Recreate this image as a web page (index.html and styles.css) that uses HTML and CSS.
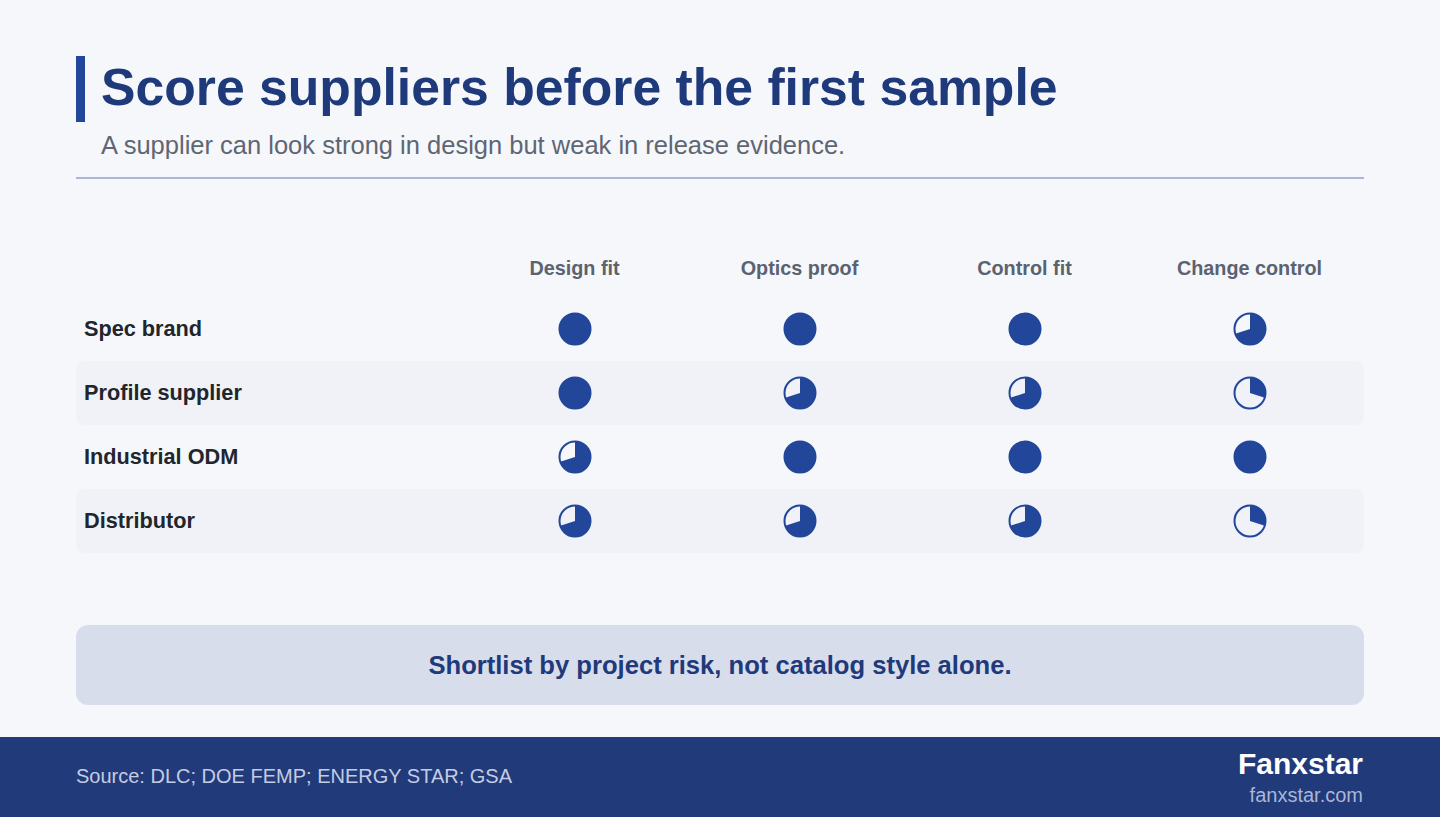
FILE: index.html
```html
<!DOCTYPE html>
<html lang="en">
<head>
<meta charset="utf-8">
<title>Score suppliers before the first sample</title>
<link rel="stylesheet" href="styles.css">
</head>
<body>
<div class="page">
  <main class="main">
    <header class="head">
      <h1 class="title">Score suppliers before the first sample</h1>
      <p class="subtitle">A supplier can look strong in design but weak in release evidence.</p>
    </header>
    <div class="divider"></div>

    <section class="table">
      <div class="row row-head">
        <div class="cell-label"></div>
        <div class="cell">Design fit</div>
        <div class="cell">Optics proof</div>
        <div class="cell">Control fit</div>
        <div class="cell">Change control</div>
      </div>

      <div class="row">
        <div class="cell-label">Spec brand</div>
        <div class="cell"><svg class="ball" viewBox="0 0 34 34"><circle cx="17" cy="17" r="15.5" class="ring"/><circle cx="17" cy="17" r="15.5" class="fill"/></svg></div>
        <div class="cell"><svg class="ball" viewBox="0 0 34 34"><circle cx="17" cy="17" r="15.5" class="ring"/><circle cx="17" cy="17" r="15.5" class="fill"/></svg></div>
        <div class="cell"><svg class="ball" viewBox="0 0 34 34"><circle cx="17" cy="17" r="15.5" class="ring"/><circle cx="17" cy="17" r="15.5" class="fill"/></svg></div>
        <div class="cell"><svg class="ball" viewBox="0 0 34 34"><circle cx="17" cy="17" r="15.5" class="ring"/><path class="fill" d="M17 17 L17 1.5 A15.5 15.5 0 1 1 2.26 21.79 Z"/></svg></div>
      </div>

      <div class="row row-alt">
        <div class="cell-label">Profile supplier</div>
        <div class="cell"><svg class="ball" viewBox="0 0 34 34"><circle cx="17" cy="17" r="15.5" class="ring"/><circle cx="17" cy="17" r="15.5" class="fill"/></svg></div>
        <div class="cell"><svg class="ball" viewBox="0 0 34 34"><circle cx="17" cy="17" r="15.5" class="ring"/><path class="fill" d="M17 17 L17 1.5 A15.5 15.5 0 1 1 2.26 21.79 Z"/></svg></div>
        <div class="cell"><svg class="ball" viewBox="0 0 34 34"><circle cx="17" cy="17" r="15.5" class="ring"/><path class="fill" d="M17 17 L17 1.5 A15.5 15.5 0 1 1 2.26 21.79 Z"/></svg></div>
        <div class="cell"><svg class="ball" viewBox="0 0 34 34"><circle cx="17" cy="17" r="15.5" class="ring"/><path class="fill" d="M17 17 L17 1.5 A15.5 15.5 0 0 1 31.74 21.79 Z"/></svg></div>
      </div>

      <div class="row">
        <div class="cell-label">Industrial ODM</div>
        <div class="cell"><svg class="ball" viewBox="0 0 34 34"><circle cx="17" cy="17" r="15.5" class="ring"/><path class="fill" d="M17 17 L17 1.5 A15.5 15.5 0 1 1 2.26 21.79 Z"/></svg></div>
        <div class="cell"><svg class="ball" viewBox="0 0 34 34"><circle cx="17" cy="17" r="15.5" class="ring"/><circle cx="17" cy="17" r="15.5" class="fill"/></svg></div>
        <div class="cell"><svg class="ball" viewBox="0 0 34 34"><circle cx="17" cy="17" r="15.5" class="ring"/><circle cx="17" cy="17" r="15.5" class="fill"/></svg></div>
        <div class="cell"><svg class="ball" viewBox="0 0 34 34"><circle cx="17" cy="17" r="15.5" class="ring"/><circle cx="17" cy="17" r="15.5" class="fill"/></svg></div>
      </div>

      <div class="row row-alt">
        <div class="cell-label">Distributor</div>
        <div class="cell"><svg class="ball" viewBox="0 0 34 34"><circle cx="17" cy="17" r="15.5" class="ring"/><path class="fill" d="M17 17 L17 1.5 A15.5 15.5 0 1 1 2.26 21.79 Z"/></svg></div>
        <div class="cell"><svg class="ball" viewBox="0 0 34 34"><circle cx="17" cy="17" r="15.5" class="ring"/><path class="fill" d="M17 17 L17 1.5 A15.5 15.5 0 1 1 2.26 21.79 Z"/></svg></div>
        <div class="cell"><svg class="ball" viewBox="0 0 34 34"><circle cx="17" cy="17" r="15.5" class="ring"/><path class="fill" d="M17 17 L17 1.5 A15.5 15.5 0 1 1 2.26 21.79 Z"/></svg></div>
        <div class="cell"><svg class="ball" viewBox="0 0 34 34"><circle cx="17" cy="17" r="15.5" class="ring"/><path class="fill" d="M17 17 L17 1.5 A15.5 15.5 0 0 1 31.74 21.79 Z"/></svg></div>
      </div>
    </section>

    <div class="callout">Shortlist by project risk, not catalog style alone.</div>
  </main>

  <footer class="footer">
    <div class="source">Source: DLC; DOE FEMP; ENERGY STAR; GSA</div>
    <div class="brand">
      <div class="brand-name">Fanxstar</div>
      <div class="brand-url">fanxstar.com</div>
    </div>
  </footer>
</div>
</body>
</html>
```

FILE: styles.css
```css
* { box-sizing: border-box; }

html, body {
  margin: 0;
  padding: 0;
}

body {
  background: #f5f7fb;
  font-family: "Liberation Sans", Arial, sans-serif;
}

.page {
  width: 1440px;
  height: 817px;
  display: flex;
  flex-direction: column;
  overflow: hidden;
}

.main {
  padding: 56px 76px 0 76px;
}

.head {
  display: flex;
  flex-direction: column;
}

.title {
  margin: 0;
  font-size: 51.7px;
  line-height: 62px;
  padding-bottom: 4px;
  font-weight: 700;
  color: #1f3a7a;
  border-left: 9px solid #22479a;
  padding-left: 16px;
}

.subtitle {
  margin: 8px 0 0 25px;
  font-size: 25.5px;
  line-height: 30px;
  color: #5e6673;
}

.divider {
  margin-top: 17px;
  height: 2px;
  background: #a9b6d8;
}

.table {
  margin-top: 60px;
  display: flex;
  flex-direction: column;
}

.row {
  display: grid;
  grid-template-columns: 386px repeat(4, 225px);
  height: 64px;
  align-items: center;
  border-radius: 8px;
}

.row-head {
  height: 58px;
}

.row-alt {
  background: #f0f2f7;
}

.row-head .cell {
  font-size: 19.8px;
  font-weight: 700;
  color: #5b6270;
}

.cell {
  display: flex;
  justify-content: center;
  align-items: center;
}

.cell-label {
  padding-left: 8px;
  font-size: 21.7px;
  font-weight: 700;
  color: #22252c;
}

.ball {
  width: 34px;
  height: 34px;
  display: block;
}

.ring {
  fill: none;
  stroke: #22469a;
  stroke-width: 2;
}

.fill {
  fill: #22469a;
}

.callout {
  margin-top: 72px;
  height: 80px;
  border-radius: 12px;
  background: #d8ddec;
  color: #1f3a7a;
  font-size: 25.6px;
  font-weight: 700;
  display: flex;
  align-items: center;
  justify-content: center;
}

.footer {
  margin-top: auto;
  height: 80px;
  background: #213a7a;
  padding: 0 77px 0 76px;
  display: flex;
  justify-content: space-between;
  align-items: flex-start;
}

.source {
  margin-top: 27px;
  font-size: 20px;
  line-height: 24px;
  color: #c4cce3;
}

.brand {
  margin-top: 11px;
  text-align: right;
}

.brand-name {
  font-size: 30px;
  line-height: 32px;
  font-weight: 700;
  color: #ffffff;
}

.brand-url {
  font-size: 20px;
  line-height: 30px;
  color: #aab6d6;
}
```
